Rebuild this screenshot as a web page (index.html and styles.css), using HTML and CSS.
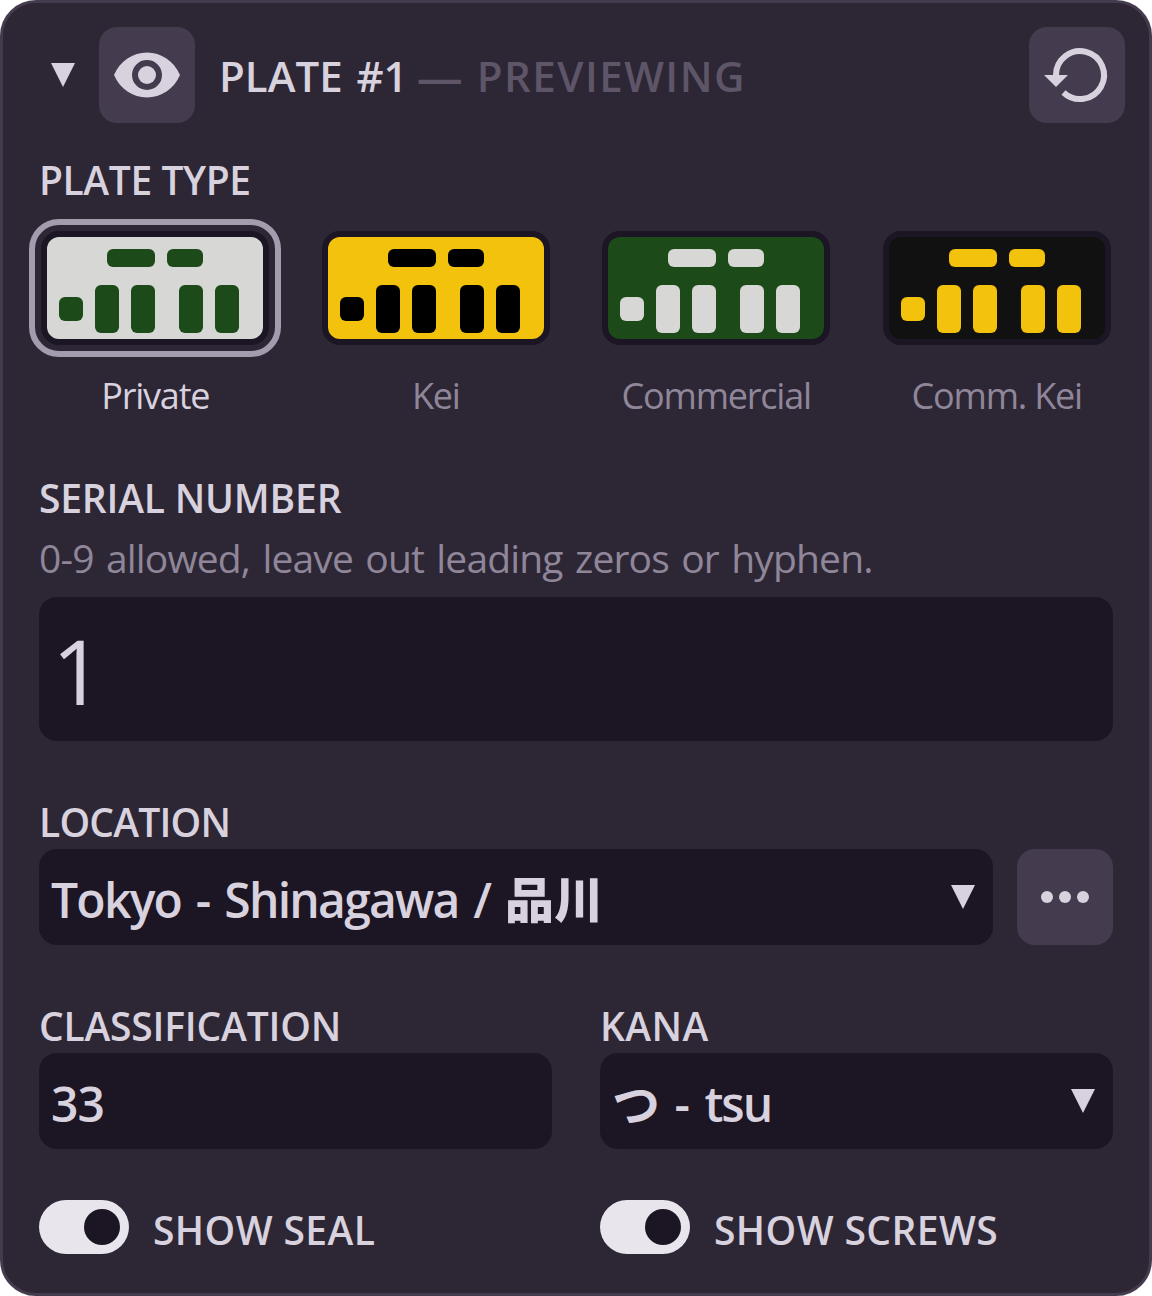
FILE: index.html
```html
<!DOCTYPE html>
<html lang="en">

<head>
    <meta charset="UTF-8">
    <meta name="viewport" content="width=device-width, initial-scale=1.0">
    <title>Plate Editor</title>
    <link rel="stylesheet" href="styles.css">
</head>

<body>
    <!-- Shared icons -->
    <svg class="sprite" aria-hidden="true">
        <symbol id="caret" viewBox="0 0 24 24">
            <path d="M0 0h24L12 24z" />
        </symbol>
        <symbol id="plate" viewBox="0 0 216 102">
            <rect x="60" y="12" width="48" height="18" rx="6" />
            <rect x="120" y="12" width="36" height="18" rx="6" />
            <rect x="12" y="60" width="24" height="24" rx="6" />
            <rect x="48" y="48" width="24" height="48" rx="6" />
            <rect x="84" y="48" width="24" height="48" rx="6" />
            <rect x="132" y="48" width="24" height="48" rx="6" />
            <rect x="168" y="48" width="24" height="48" rx="6" />
        </symbol>
    </svg>

    <div class="panel">
        <div class="header">
            <svg class="caret"><use href="#caret" /></svg>
            <button class="icon-button">
                <svg viewBox="0 0 96 96">
                    <path fill-rule="evenodd" d="M15 48C21 34 34 25.500 48 25.500S75 34 81 48C75 62 62 70.500 48 70.500S21 62 15 48zM48 33a15 15 0 1 0 0 30a15 15 0 1 0 0-30z" />
                    <circle cx="48" cy="48" r="9" />
                </svg>
            </button>
            <h1 class="title"><span class="name">Plate #1</span><span class="dash">—</span><span class="state">Previewing</span></h1>
            <button class="icon-button">
                <svg viewBox="0 0 96 96">
                    <path class="stroke" d="M27 50V48A24 24 0 1 1 34.500 65.500" />
                    <path d="M15 48h24L27 60z" />
                </svg>
            </button>
        </div>

        <div class="content">
            <div class="label plate-type">Plate Type</div>
            <div class="plates">
                <div class="plate selected">
                    <svg class="swatch private"><use href="#plate" /></svg>
                    <span class="caption">Private</span>
                </div>
                <div class="plate">
                    <svg class="swatch kei"><use href="#plate" /></svg>
                    <span class="caption">Kei</span>
                </div>
                <div class="plate">
                    <svg class="swatch commercial"><use href="#plate" /></svg>
                    <span class="caption">Commercial</span>
                </div>
                <div class="plate">
                    <svg class="swatch comm-kei"><use href="#plate" /></svg>
                    <span class="caption">Comm. Kei</span>
                </div>
            </div>

            <div class="field">
                <div class="label">Serial Number</div>
                <div class="hint">0-9 allowed, leave out leading zeros or hyphen.</div>
                <div class="input large"><span>1</span></div>
            </div>

            <div class="field">
                <div class="label location">Location</div>
                <div class="row">
                    <div class="input"><span class="location-value">Tokyo - Shinagawa / <span class="kanji">品川</span></span><svg class="caret"><use href="#caret" /></svg></div>
                    <button class="icon-button">
                        <svg viewBox="0 0 96 96">
                            <circle cx="30" cy="48" r="6" />
                            <circle cx="48" cy="48" r="6" />
                            <circle cx="66" cy="48" r="6" />
                        </svg>
                    </button>
                </div>
            </div>

            <div class="columns">
                <div class="field">
                    <div class="label">Classification</div>
                    <div class="input"><span class="class-value">33</span></div>
                </div>
                <div class="field">
                    <div class="label kana">Kana</div>
                    <div class="input"><span class="kana-value">つ - tsu</span><svg class="caret"><use href="#caret" /></svg></div>
                </div>
            </div>

            <div class="columns toggles">
                <div class="toggle">
                    <span class="switch"></span>
                    <span class="label">Show Seal</span>
                </div>
                <div class="toggle">
                    <span class="switch"></span>
                    <span class="label">Show Screws</span>
                </div>
            </div>
        </div>
    </div>
</body>

</html>
```
FILE: styles.css
```css
* {
    box-sizing: border-box;
}

body {
    margin: 0;
    background: #fff;
    font-family: 'Open Sans', 'Noto Sans CJK JP', sans-serif;
    color: #d8d1de;
}

.sprite {
    display: none;
}

.panel {
    height: 1296px;
    padding: 24px;
    background: #2d2635;
    border: 3px solid #443c4e;
    border-radius: 36px;
}

.header {
    display: flex;
    align-items: center;
    gap: 24px;
    padding-left: 24px;
}

.caret {
    flex: none;
    width: 24px;
    height: 24px;
    fill: currentColor;
}

.icon-button {
    flex: none;
    width: 96px;
    height: 96px;
    padding: 0;
    border: 0;
    border-radius: 18px;
    background: #443c4e;
    color: inherit;
}

.icon-button svg {
    display: block;
    fill: currentColor;
}

.icon-button .stroke {
    fill: none;
    stroke: currentColor;
    stroke-width: 6;
}

.title {
    flex: 1;
    display: flex;
    margin: 0;
    padding-top: 2px;
    font-size: 42px;
    font-weight: 600;
    line-height: 48px;
    text-transform: uppercase;
    white-space: nowrap;
}

.name {
    word-spacing: 3px;
}

.dash,
.state {
    color: #5e5668;
}

.dash {
    margin: 0 14px 0 9px;
    font-size: 46px;
}

.state {
    letter-spacing: 1.5px;
}

.content {
    padding: 30px 12px 0;
}

.label {
    height: 54px;
    font-size: 39px;
    font-weight: 600;
    line-height: 54px;
    letter-spacing: -0.2px;
    text-transform: uppercase;
    white-space: nowrap;
}

.label.plate-type {
    letter-spacing: -0.4px;
}

.label.location {
    letter-spacing: -0.8px;
}

.label.kana {
    letter-spacing: 0.4px;
}

.plates {
    display: grid;
    grid-template-columns: repeat(4, 1fr);
    gap: 48px;
    height: 240px;
    padding-top: 24px;
    margin-bottom: 24px;
}

.plate {
    display: flex;
    flex-direction: column;
    align-items: center;
    color: #8f8799;
}

.plate.selected {
    color: #d8d1de;
}

.swatch {
    flex: none;
    width: 228px;
    height: 114px;
    border: 6px solid #1c1523;
    border-radius: 18px;
}

.selected .swatch {
    outline: 6px solid #a49bae;
    outline-offset: 6px;
}

.private {
    background: #d7d7d5;
    fill: #1c4a19;
}

.kei {
    background: #f2c20c;
    fill: #000;
}

.commercial {
    background: #1c4a19;
    fill: #d7d7d5;
}

.comm-kei {
    background: #111;
    fill: #f2c20c;
}

.caption {
    margin-top: 27px;
    font-size: 36px;
    line-height: 48px;
    letter-spacing: -1.2px;
    white-space: nowrap;
}

.field {
    margin-bottom: 54px;
}

.hint {
    height: 72px;
    font-size: 39px;
    line-height: 66px;
    letter-spacing: -0.84px;
    word-spacing: 3px;
    color: #8f8799;
    white-space: nowrap;
}

.input {
    flex: 1;
    display: flex;
    align-items: center;
    justify-content: space-between;
    height: 96px;
    padding: 0 18px 0 12px;
    border-radius: 18px;
    background: #1c1523;
    font-size: 48px;
    font-weight: 600;
    white-space: nowrap;
}

.input.large {
    height: 144px;
    padding-top: 2px;
    padding-left: 13px;
    font-size: 90px;
    font-weight: 400;
}

.location-value {
    padding-top: 4px;
    letter-spacing: -1.75px;
    word-spacing: 4px;
}

.kanji {
    font-family: 'Noto Sans CJK JP', sans-serif;
    font-size: 49px;
    font-weight: 900;
    line-height: 1;
    letter-spacing: 0;
}

.class-value {
    padding-top: 4px;
    letter-spacing: -1px;
}

.kana-value {
    letter-spacing: -2px;
    word-spacing: 6px;
}

.row {
    display: flex;
    gap: 24px;
}

.columns {
    display: grid;
    grid-template-columns: 1fr 1fr;
    gap: 48px;
}

.toggles {
    margin-top: -3px;
}

.toggle {
    display: flex;
    align-items: center;
    gap: 24px;
}

.toggle .label {
    line-height: 60px;
    letter-spacing: 0.4px;
}

.switch {
    flex: none;
    width: 90px;
    height: 54px;
    padding: 9px 9px 9px 45px;
    border-radius: 27px;
    background: #e9e5ed;
}

.switch::before {
    content: '';
    display: block;
    width: 36px;
    height: 36px;
    border-radius: 50%;
    background: #1c1523;
}
```
